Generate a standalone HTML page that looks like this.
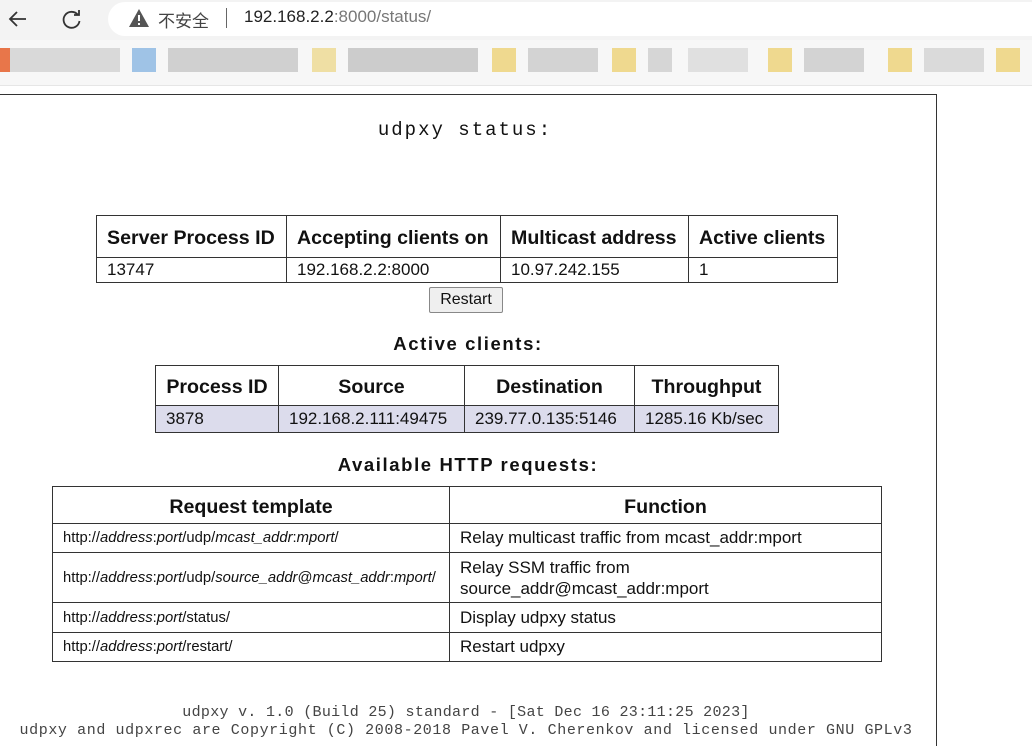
<!DOCTYPE html>
<html><head><meta charset="utf-8"><style>
*{margin:0;padding:0;box-sizing:border-box}
html,body{width:1032px;height:746px;overflow:hidden}
body{background:#fff;font-family:"Liberation Sans",Arial,sans-serif;position:relative;color:#111}
.top{position:absolute;left:0;top:0;width:1032px;height:40px;background:#f3f3f3}
.omni{position:absolute;left:108px;top:2px;width:940px;height:34px;border-radius:17px;background:#fff}
.bm{position:absolute;left:0;top:40px;width:1032px;height:46px;background:#f7f7f7;border-bottom:1px solid #e6e6e6}
.blk{position:absolute;height:24px;top:48px}
table{position:absolute;border-collapse:collapse;table-layout:fixed}
td,th{border:1px solid #333;padding:0 10px;text-align:left;white-space:nowrap}
th{font-weight:bold;font-size:19.6px;padding-top:3px}
td{font-size:17px}
.t2 th{text-align:center}
.t3 th{text-align:center;padding-top:5px}
.h{position:absolute;left:0;width:936px;text-align:center;font-weight:bold;font-size:18.5px;letter-spacing:1.6px}
.mono{font-family:"Liberation Mono",monospace}
.sm{font-size:14.8px}
</style></head><body>
<div class="top"><div class="omni"></div></div>
<svg style="position:absolute;left:6px;top:8px" width="24" height="22" viewBox="0 0 24 22"><path d="M20 11H4M11 4L4 11L11 18" fill="none" stroke="#333" stroke-width="1.8"/></svg>
<svg style="position:absolute;left:60px;top:7px" width="24" height="24" viewBox="0 0 24 24"><path d="M18 8A8 8 0 1 0 19.5 14M19 3V8H14" fill="none" stroke="#333" stroke-width="1.8"/></svg>
<svg style="position:absolute;left:128px;top:8px" width="22" height="20" viewBox="0 0 22 20"><path d="M11 1L21 19H1Z" fill="#555"/><rect x="10" y="7" width="2" height="6" fill="#fff"/><rect x="10" y="15" width="2" height="2" fill="#fff"/></svg>
<div style="position:absolute;left:158px;top:7px;font-size:17px;color:#444;font-family:'Liberation Sans','Noto Sans CJK SC',sans-serif">不安全</div>
<div style="position:absolute;left:226px;top:8px;width:1px;height:20px;background:#666"></div>
<div style="position:absolute;left:244px;top:7px;font-size:17px;color:#222">192.168.2.2<span style="color:#777">:8000/status/</span></div>
<div class="bm"></div>
<div class="blk" style="left:0;width:10px;background:#e8764a"></div>
<div class="blk" style="left:10px;width:110px;background:#d9d9d9"></div>
<div class="blk" style="left:132px;width:24px;background:#9fc3e6"></div>
<div class="blk" style="left:168px;width:130px;background:#d0d0d0"></div>
<div class="blk" style="left:312px;width:24px;background:#efdfa4"></div>
<div class="blk" style="left:348px;width:130px;background:#cccccc"></div>
<div class="blk" style="left:492px;width:24px;background:#efd98f"></div>
<div class="blk" style="left:528px;width:70px;background:#d3d3d3"></div>
<div class="blk" style="left:612px;width:24px;background:#efd98f"></div>
<div class="blk" style="left:648px;width:24px;background:#d6d6d6"></div>
<div class="blk" style="left:688px;width:60px;background:#e0e0e0"></div>
<div class="blk" style="left:768px;width:24px;background:#efd98f"></div>
<div class="blk" style="left:804px;width:60px;background:#d3d3d3"></div>
<div class="blk" style="left:888px;width:24px;background:#efd98f"></div>
<div class="blk" style="left:924px;width:60px;background:#dadada"></div>
<div class="blk" style="left:996px;width:24px;background:#efd98f"></div>
<div style="position:absolute;left:-2px;top:94px;width:939px;height:660px;border:1px solid #333"></div>
<div class="mono" style="position:absolute;left:0;width:930px;top:119px;text-align:center;font-size:19px;letter-spacing:2px">udpxy status:</div>
<table style="left:96px;top:215px;width:741px">
<colgroup><col style="width:190px"><col style="width:214px"><col style="width:188px"><col style="width:149px"></colgroup>
<tr style="height:42px"><th>Server Process ID</th><th>Accepting clients on</th><th>Multicast address</th><th>Active clients</th></tr>
<tr style="height:25px"><td>13747</td><td>192.168.2.2:8000</td><td>10.97.242.155</td><td>1</td></tr>
</table>
<div style="position:absolute;left:429px;top:287px;width:74px;height:26px;border:1px solid #888;border-radius:2px;background:#efefef;font-size:16px;text-align:center;line-height:24px">Restart</div>
<div class="h" style="top:333px">Active clients:</div>
<table class="t2" style="left:155px;top:365px;width:623px">
<colgroup><col style="width:123px"><col style="width:186px"><col style="width:170px"><col style="width:144px"></colgroup>
<tr style="height:40px"><th>Process ID</th><th>Source</th><th>Destination</th><th>Throughput</th></tr>
<tr style="height:27px;background:#dcdcec"><td>3878</td><td>192.168.2.111:49475</td><td>239.77.0.135:5146</td><td>1285.16 Kb/sec</td></tr>
</table>
<div class="h" style="top:454px">Available HTTP requests:</div>
<table class="t3" style="left:52px;top:486px;width:829px">
<colgroup><col style="width:397px"><col style="width:432px"></colgroup>
<tr style="height:37px"><th>Request template</th><th>Function</th></tr>
<tr style="height:29px"><td class="sm">http://<i>address</i>:<i>port</i>/udp/<i>mcast_addr</i>:<i>mport</i>/</td><td>Relay multicast traffic from mcast_addr:mport</td></tr>
<tr style="height:50px"><td class="sm">http://<i>address</i>:<i>port</i>/udp/<i>source_addr</i>@<i>mcast_addr</i>:<i>mport</i>/</td><td style="line-height:21px">Relay SSM traffic from<br>source_addr@mcast_addr:mport</td></tr>
<tr style="height:30px"><td class="sm">http://<i>address</i>:<i>port</i>/status/</td><td>Display udpxy status</td></tr>
<tr style="height:29px"><td class="sm">http://<i>address</i>:<i>port</i>/restart/</td><td>Restart udpxy</td></tr>
</table>
<div class="mono" style="position:absolute;left:0;width:932px;top:704px;text-align:center;font-size:15px;line-height:18px;color:#444;letter-spacing:0.3px">udpxy v. 1.0 (Build 25) standard - [Sat Dec 16 23:11:25 2023]<br><span style="letter-spacing:0.6px">udpxy and udpxrec are Copyright (C) 2008-2018 Pavel V. Cherenkov and licensed under GNU GPLv3</span></div>
</body></html>
